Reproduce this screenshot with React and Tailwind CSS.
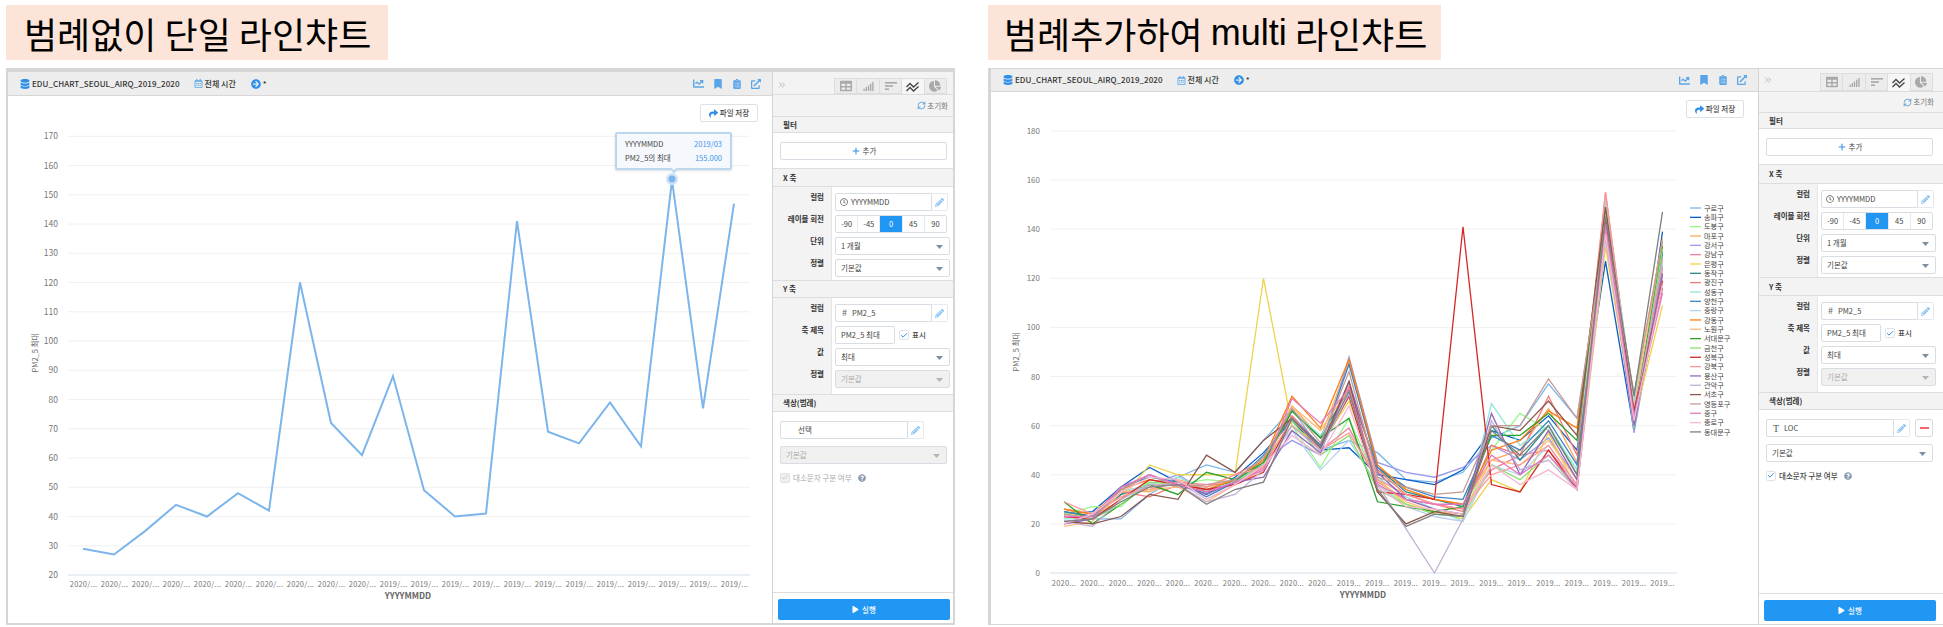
import React from "react";
import {
  FaDatabase,
  FaRegCalendarAlt,
  FaArrowCircleRight,
  FaChartLine,
  FaBookmark,
  FaClipboardList,
  FaExternalLinkAlt,
  FaTable,
  FaSignal,
  FaChartPie,
  FaPencilAlt,
  FaRegClock,
  FaPlay,
  FaQuestionCircle,
  FaShare,
} from "react-icons/fa";
import { RefreshCw, Plus, Check, ChevronsRight } from "lucide-react";

const LABELS = [
  ...Array(10).fill("2020"),
  ...Array(12).fill("2019"),
];

const SINGLE = [29, 27, 35, 44, 40, 48, 42, 120, 72, 61, 88, 49, 40, 41, 141, 69, 65, 79, 64, 155, 77, 147];

const SERIES = [
  ["구로구", "#7cb5ec", [23, 22, 22, 32, 39, 44, 41, 54, 67, 50, 54, 49, 38, 37, 41, 55, 60, 77, 63, 138, 66, 125]],
  ["송파구", "#0a5fc4", [24, 25, 35, 43, 37, 32, 39, 49, 62, 50, 51, 40, 38, 36, 42, 58, 54, 64, 50, 127, 58, 139]],
  ["도봉구", "#98f58a", [24, 27, 27, 38, 36, 38, 37, 46, 60, 43, 63, 36, 28, 24, 23, 50, 65, 58, 42, 150, 70, 128]],
  ["마포구", "#ffa95c", [26, 23, 34, 33, 38, 35, 38, 45, 68, 55, 86, 42, 34, 30, 28, 46, 50, 67, 45, 146, 71, 136]],
  ["강서구", "#9a99ee", [20, 22, 32, 36, 40, 33, 38, 46, 54, 48, 88, 45, 41, 39, 43, 52, 46, 55, 38, 143, 57, 122]],
  ["강남구", "#f0829f", [23, 23, 33, 34, 37, 36, 36, 43, 60, 50, 59, 37, 30, 28, 26, 42, 48, 50, 36, 140, 60, 124]],
  ["은평구", "#ecd34a", [25, 22, 30, 44, 40, 40, 40, 120, 60, 52, 70, 38, 28, 25, 22, 38, 33, 57, 34, 133, 62, 109]],
  ["동작구", "#2a8a80", [25, 23, 32, 36, 36, 33, 38, 44, 66, 55, 75, 43, 33, 30, 27, 60, 46, 60, 40, 148, 66, 130]],
  ["광진구", "#f47a7a", [26, 24, 33, 31, 36, 35, 40, 46, 64, 52, 76, 42, 32, 28, 25, 52, 48, 72, 48, 155, 68, 121]],
  ["성동구", "#8de8da", [22, 22, 33, 36, 39, 34, 37, 47, 66, 56, 72, 39, 31, 26, 21, 69, 52, 60, 42, 152, 70, 126]],
  ["양천구", "#3c84c4", [25, 23, 35, 39, 37, 31, 37, 48, 63, 52, 85, 43, 35, 31, 30, 56, 50, 62, 44, 140, 64, 131]],
  ["중랑구", "#b6d0f0", [21, 22, 33, 35, 37, 30, 36, 46, 58, 42, 54, 36, 27, 23, 21, 44, 40, 52, 35, 144, 68, 120]],
  ["강동구", "#ff7f0e", [26, 24, 34, 38, 36, 34, 38, 46, 72, 59, 87, 44, 34, 30, 28, 50, 54, 66, 59, 145, 62, 128]],
  ["노원구", "#ffbb78", [19, 21, 33, 34, 35, 29, 36, 42, 68, 58, 75, 38, 29, 25, 24, 46, 44, 54, 38, 141, 66, 134]],
  ["서대문구", "#2ca02c", [29, 20, 28, 36, 32, 41, 38, 45, 66, 55, 63, 29, 27, 25, 27, 56, 56, 65, 54, 146, 62, 133]],
  ["금천구", "#88e070", [24, 22, 28, 37, 36, 33, 37, 44, 62, 48, 56, 34, 28, 24, 23, 44, 38, 48, 34, 147, 59, 132]],
  ["성북구", "#d62728", [23, 22, 30, 38, 36, 34, 36, 41, 63, 51, 72, 33, 32, 30, 141, 36, 33, 50, 34, 143, 66, 119]],
  ["강북구", "#ff9896", [29, 24, 31, 35, 37, 35, 40, 43, 63, 50, 57, 38, 32, 28, 26, 40, 44, 52, 36, 155, 64, 118]],
  ["용산구", "#9467bd", [20, 22, 34, 40, 36, 32, 37, 39, 58, 49, 78, 41, 30, 26, 24, 65, 40, 58, 38, 139, 60, 122]],
  ["관악구", "#c5b0d5", [21, 19, 30, 36, 36, 29, 32, 42, 60, 50, 73, 36, 18, 0, 22, 62, 42, 46, 34, 136, 63, 128]],
  ["서초구", "#8c564b", [21, 20, 23, 32, 30, 48, 41, 54, 63, 51, 78, 33, 20, 25, 23, 60, 58, 70, 56, 149, 65, 116]],
  ["영등포구", "#c49c94", [24, 22, 34, 40, 35, 36, 38, 47, 67, 53, 82, 39, 35, 32, 33, 60, 60, 79, 63, 140, 73, 135]],
  ["중구", "#e377c2", [23, 23, 35, 40, 36, 33, 37, 42, 71, 61, 75, 36, 30, 28, 28, 48, 40, 48, 35, 142, 64, 114]],
  ["종로구", "#f7b6d2", [20, 24, 33, 39, 38, 30, 36, 44, 56, 48, 68, 35, 27, 26, 24, 44, 36, 42, 34, 138, 62, 117]],
  ["동대문구", "#7f7f7f", [21, 22, 29, 35, 36, 28, 34, 37, 63, 51, 74, 34, 19, 24, 23, 58, 48, 60, 40, 145, 72, 147]],
];

const toPoints = (values, x0, dx, y0, unit, base) =>
  values.map((v, i) => `${x0 + i * dx},${y0 - (v - base) * unit}`).join(" ");

const SingleChart = () => {
  const ticks = [];
  for (let v = 20; v <= 170; v += 10) ticks.push(v);
  const y = (v) => 575 - (v - 20) * 2.925;
  return (
    <svg width="764" height="526" className="block">
      <g transform="translate(-8 -96)">
        {ticks.map((v) => (
          <g key={v}>
            <line x1="68" x2="750" y1={y(v)} y2={y(v)} stroke={v === 20 ? "#d5deec" : "#f0f0f0"} />
            <text x="58" y={y(v) + 3} textAnchor="end" fontSize="8.5" fill="#777">{v}</text>
          </g>
        ))}
        {LABELS.map((l, i) => (
          <text key={i} x={83.5 + i * 31} y="587" textAnchor="middle" fontSize="7.5" letterSpacing="0.2" fill="#777">{l}/...</text>
        ))}
        <text transform="translate(38 353) rotate(-90)" textAnchor="middle" fontSize="7.5" fill="#666">PM2_5 최대</text>
        <text x="408" y="599" textAnchor="middle" fontSize="8.5" fontWeight="700" fill="#666">YYYYMMDD</text>
        <polyline points={toPoints(SINGLE, 83, 31, 575, 2.925, 20)} fill="none" stroke="#7cb5ec" strokeWidth="2" />
        <circle cx="672" cy="179" r="6" fill="#cfe3f8" />
        <circle cx="672" cy="179" r="3.5" fill="#7cb5ec" />
      </g>
    </svg>
  );
};

const MultiChart = () => {
  const ticks = [0, 20, 40, 60, 80, 100, 120, 140, 160, 180];
  const y = (v) => 573 - v * 2.456;
  return (
    <svg width="767" height="531" className="block">
      <g transform="translate(-991 -92)">
        {ticks.map((v) => (
          <g key={v}>
            <line x1="1050" x2="1677" y1={y(v)} y2={y(v)} stroke={v === 0 ? "#d5deec" : "#f0f0f0"} />
            <text x="1040" y={y(v) + 3} textAnchor="end" fontSize="8" fill="#777">{v}</text>
          </g>
        ))}
        {LABELS.map((l, i) => (
          <text key={i} x={1064 + i * 28.5} y="586" textAnchor="middle" fontSize="7.5" letterSpacing="0.2" fill="#777">{l}...</text>
        ))}
        <text transform="translate(1019 352) rotate(-90)" textAnchor="middle" fontSize="7.5" fill="#666">PM2_5 최대</text>
        <text x="1363" y="598" textAnchor="middle" fontSize="8.5" fontWeight="700" fill="#666">YYYYMMDD</text>
        {SERIES.map(([name, color, values]) => (
          <polyline key={name} points={toPoints(values, 1064, 28.5, 573, 2.456, 0)} fill="none" stroke={color} strokeWidth="1.3" />
        ))}
        {SERIES.map(([name, color], i) => (
          <g key={name}>
            <line x1="1690" x2="1701" y1={208 + i * 9.33} y2={208 + i * 9.33} stroke={color} strokeWidth="1.3" />
            <text x="1704" y={210.7 + i * 9.33} fontSize="7.2" fill="#444">{name}</text>
          </g>
        ))}
      </g>
    </svg>
  );
};

const SaveButton = ({ className }) => (
  <button className={`absolute flex h-[18px] w-[58px] items-center justify-center gap-[2px] rounded-[2px] border border-[#dde1e6] bg-white text-[7.5px] font-medium text-[#444] ${className}`}>
    <FaShare size={9} className="text-[#2f8fe8]" />
    파일 저장
  </button>
);

const Tooltip = () => (
  <div className="absolute left-[607px] top-[36px] h-[38px] w-[117px] rounded-[2px] border-2 border-[#bcd6ee] bg-[#f5f8fc] px-[8px] pt-[3px] text-[7.5px] leading-[13.5px] text-[#444] shadow-sm">
    <div className="flex justify-between">
      <span>YYYYMMDD</span>
      <span className="text-[#3d97ee]">2019/03</span>
    </div>
    <div className="flex justify-between">
      <span>PM2_5의 최대</span>
      <span className="text-[#3d97ee]">155.000</span>
    </div>
    <div className="absolute left-[54px] top-[32px] size-[6px] rotate-45 border-b-2 border-r-2 border-[#bcd6ee] bg-[#f5f8fc]" />
  </div>
);

const Caret = ({ muted }) => (
  <svg width="7" height="4" viewBox="0 0 7 4" className="absolute right-[6px] top-[7px]">
    <path d="M0 0h7L3.5 4z" fill={muted ? "#b5b5b5" : "#7c8ea3"} />
  </svg>
);

const Select = ({ children, disabled, className = "w-[115px]" }) => (
  <div className={`relative flex h-[18px] items-center rounded-[2px] border border-[#d8dde3] pl-[5px] text-[7.5px] ${disabled ? "bg-[#f0f0f0] text-[#aaa]" : "bg-white text-[#444]"} ${className}`}>
    {children}
    <Caret muted={disabled} />
  </div>
);

const ColumnInput = ({ icon, children, wide }) => (
  <div className="flex h-[18px]">
    <div className={`flex items-center gap-[3px] rounded-l-[2px] border border-[#d8dde3] bg-white pl-[4px] text-[7.5px] text-[#444] ${wide ? "w-[128px]" : "w-[97px]"}`}>
      {icon}
      {children}
    </div>
    <div className="flex w-[16px] items-center justify-center rounded-r-[2px] border border-l-0 border-[#e6e9ed] bg-white">
      <FaPencilAlt size={9} className="text-[#8cc4f5]" />
    </div>
  </div>
);

const Segments = () => (
  <div className="flex h-[18px] w-[112px] overflow-hidden rounded-[2px] border border-[#d8dde3] bg-white text-[7.5px] text-[#444]">
    {["-90", "-45", "0", "45", "90"].map((v) => (
      <div key={v} className={`flex flex-1 items-center justify-center border-r border-[#e6e9ed] last:border-r-0 ${v === "0" ? "bg-[#2196f3] text-white" : ""}`}>
        {v}
      </div>
    ))}
  </div>
);

const Checkbox = ({ checked }) => (
  <div className={`flex size-[10px] items-center justify-center rounded-[2px] border border-[#dfe3e8] ${checked ? "bg-white" : "bg-[#f0f0f0]"}`}>
    <Check size={9} strokeWidth={3} className={checked ? "text-[#2f8fe8]" : "text-[#c8c8c8]"} />
  </div>
);

const SectionHead = ({ children, className }) => (
  <div className={`flex items-center border-y border-[#dddddd] bg-[#f3f3f3] pl-[10px] text-[7.5px] font-bold text-[#333] ${className}`}>
    {children}
  </div>
);

const FormBody = ({ labels, className, pad, children }) => (
  <div className={`flex ${className}`}>
    <div className={`flex w-[59px] flex-col gap-[4px] border-r border-[#e6e6e6] bg-[#f3f3f3] pr-[7px] text-right text-[7.5px] font-bold text-[#333] ${pad}`}>
      {labels.map((l, i) => (
        <div key={i} className="h-[18px] leading-[8px]">{l}</div>
      ))}
    </div>
    <div className={`flex flex-1 flex-col gap-[4px] bg-white pl-[3px] ${pad}`}>{children}</div>
  </div>
);

const ChartTabs = () => (
  <div className="ml-[61px] flex h-full w-[113px]">
    <div className="flex flex-1 items-center justify-center border border-[#dddddd] bg-[#ececec]"><FaTable size={12} className="text-[#a9a9a9]" /></div>
    <div className="flex flex-1 items-center justify-center border border-l-0 border-[#dddddd] bg-[#ececec]"><FaSignal size={11} className="text-[#a9a9a9]" /></div>
    <div className="flex flex-1 items-center justify-center border border-l-0 border-[#dddddd] bg-[#ececec]">
      <svg width="12" height="10" viewBox="0 0 12 10" fill="#a9a9a9"><rect width="12" height="1.6" y="1" /><rect width="8" height="1.6" y="4.2" /><rect width="4" height="1.6" y="7.4" /></svg>
    </div>
    <div className="flex flex-1 items-center justify-center border-x border-t border-l-0 border-[#dddddd] bg-[#f6f6f6]">
      <svg width="13" height="10" viewBox="0 0 13 10" fill="none" stroke="#444" strokeWidth="1.3"><path d="M0.5 5 4 1.5 7.5 5 12.5 0.5" /><path d="M0.5 9 4 5.5 7.5 9 12.5 4.5" /></svg>
    </div>
    <div className="flex flex-1 items-center justify-center border border-l-0 border-[#dddddd] bg-[#ececec]"><FaChartPie size={12} className="text-[#a9a9a9]" /></div>
  </div>
);

const Sidebar = ({ multi }) => (
  <aside className="flex min-w-0 flex-1 flex-col border-l border-[#d4d4d4] bg-[#f3f3f3]">
    <div className={`flex flex-col ${multi ? "h-[43px]" : "h-[44px]"}`}>
      <div className={`relative border-b border-[#dddddd] ${multi ? "h-[23px] pt-[4px]" : "h-[23px] pt-[6px]"}`}>
        <ChevronsRight size={10} className={`absolute left-[4px] text-[#a9a9a9] ${multi ? "top-[6px]" : "top-[8px]"}`} />
        <ChartTabs />
      </div>
      <div className="flex w-[175px] flex-1 items-center justify-end gap-[1px] text-[7.5px] text-[#777]">
        <RefreshCw size={9} className="text-[#4a8fc9]" />
        초기화
      </div>
    </div>

    <SectionHead className="h-[17px]">필터</SectionHead>
    <div className="h-[35px] bg-white pl-[7px] pt-[9px]">
      <div className="flex h-[18px] w-[167px] items-center justify-center gap-[2px] rounded-[2px] border border-[#d8dde3] bg-white text-[7.5px] text-[#444]">
        <Plus size={10} strokeWidth={2.5} className="text-[#2f8fe8]" />
        추가
      </div>
    </div>

    <SectionHead className={multi ? "h-[20px]" : "h-[19px]"}>X 축</SectionHead>
    <FormBody labels={["컬럼", "레이블 회전", "단위", "정렬"]} className="h-[93px]" pad="pt-[6px]">
      <ColumnInput icon={<FaRegClock size={8} className="text-[#666]" />}>YYYYMMDD</ColumnInput>
      <Segments />
      <Select>1 개월</Select>
      <Select>기본값</Select>
    </FormBody>

    <SectionHead className={multi ? "h-[19px]" : "h-[18px]"}>Y 축</SectionHead>
    <FormBody labels={["컬럼", "축 제목", "값", "정렬"]} className="h-[96px]" pad="pt-[6px]">
      <ColumnInput icon={<span className="w-[9px] text-center text-[9px] text-[#666]">#</span>}>PM2_5</ColumnInput>
      <div className="flex h-[18px] items-center">
        <div className="flex h-full w-[60px] items-center rounded-[2px] border border-[#d8dde3] bg-white pl-[5px] text-[7.5px] text-[#444]">PM2_5 최대</div>
        <div className="ml-[4px]"><Checkbox checked /></div>
        <span className="ml-[3px] text-[7.5px] font-medium text-[#444]">표시</span>
      </div>
      <Select>최대</Select>
      <Select disabled>기본값</Select>
    </FormBody>

    <SectionHead className="h-[18px]">색상(범례)</SectionHead>
    <div className="flex-1 bg-white pl-[7px] pt-[9px]">
      <div className="flex h-[18px] items-center gap-[5px]">
        {multi ? (
          <ColumnInput wide icon={<span className="w-[10px] text-center font-['Liberation_Serif',serif] text-[10px] text-[#555]">T</span>}>LOC</ColumnInput>
        ) : (
          <ColumnInput wide icon={<span className="w-[10px]" />}>선택</ColumnInput>
        )}
        {multi && (
          <div className="flex h-[18px] w-[18px] items-center justify-center rounded-[2px] border border-[#d8dde3] bg-white">
            <div className="h-[1.5px] w-[9px] bg-[#f0686a]" />
          </div>
        )}
      </div>
      <div className="mt-[7px]">
        <Select disabled={!multi} className="w-[167px]">기본값</Select>
      </div>
      <div className={`mt-[8px] flex items-center gap-[3px] text-[7.5px] ${multi ? "font-medium text-[#444]" : "text-[#aaa]"}`}>
        <Checkbox checked={multi} />
        <span>대소문자 구분 여부</span>
        <FaQuestionCircle size={8} className="ml-[3px] text-[#8a9bb0]" />
      </div>
    </div>

    <div className="h-[31px] border-t border-[#dddddd] bg-white pl-[5px] pt-[6px]">
      <button className="flex h-[21px] w-[172px] items-center justify-center gap-[3px] rounded-[2px] bg-[#2196f3] text-[7.5px] font-medium text-white">
        <FaPlay size={7} />
        실행
      </button>
    </div>
  </aside>
);

const HeaderBar = ({ className }) => (
  <div className={`flex items-center border-b border-[#d6d6d6] bg-[#ededed] pl-[12px] pr-[11px] text-[8px] font-medium text-[#333] ${className}`}>
    <FaDatabase size={10} className="mr-[2px] text-[#2f8fe8]" />
    <span className="tracking-[0.05px]">EDU_CHART_SEOUL_AIRQ_2019_2020</span>
    <FaRegCalendarAlt size={9} className="ml-[14px] mr-[2px] text-[#5aa5e8]" />
    <span>전체 시간</span>
    <FaArrowCircleRight size={10} className="ml-[15px] text-[#2f8fe8]" />
    <span className="ml-[2px]">*</span>
    <div className="ml-auto flex items-center gap-[9px] text-[#5aa5e8]">
      <FaChartLine size={11} />
      <FaBookmark size={10} />
      <FaClipboardList size={10} />
      <FaExternalLinkAlt size={10} />
    </div>
  </div>
);

const App = () => (
  <div className="flex h-[627px] w-[1943px] overflow-hidden bg-white pl-[6px] pt-[5px] font-['Noto_Sans_CJK_KR','Noto_Sans',sans-serif]">
    {/* left: no legend */}
    <section className="flex w-[949px] shrink-0 flex-col">
      <h2 className="flex h-[55px] w-[382px] items-center bg-[#fce5d8] pl-[18px] text-[36px] font-normal leading-none text-black">
        범례없이 단일 라인챠트
      </h2>
      <div className="mt-[8px] flex h-[557px] border-x-[2px] border-b-[2px] border-t-[4px] border-[#d6d6d6]">
        <div className="flex w-[764px] shrink-0 flex-col">
          <HeaderBar className="h-[24px]" />
          <div className="relative flex-1 bg-white">
            <SaveButton className="right-[14px] top-[8px]" />
            <Tooltip />
            <SingleChart />
          </div>
        </div>
        <Sidebar />
      </div>
    </section>

    {/* right: legend + multi */}
    <section className="ml-[33px] flex w-[965px] shrink-0 flex-col">
      <h2 className="flex h-[55px] w-[453px] items-center bg-[#fce5d8] pl-[16px] text-[36px] font-normal leading-none text-black">
        범례추가하여&nbsp;<span className="font-['Liberation_Sans',sans-serif]">multi</span>&nbsp;라인챠트
      </h2>
      <div className="mt-[8px] flex h-[557px] border-y-[1px] border-l-[3px] border-[#d6d6d6]">
        <div className="flex w-[767px] shrink-0 flex-col">
          <HeaderBar className="h-[23px]" />
          <div className="relative flex-1 bg-white">
            <SaveButton className="right-[14px] top-[8px]" />
            <MultiChart />
          </div>
        </div>
        <Sidebar multi />
      </div>
    </section>
  </div>
);

export default App;
